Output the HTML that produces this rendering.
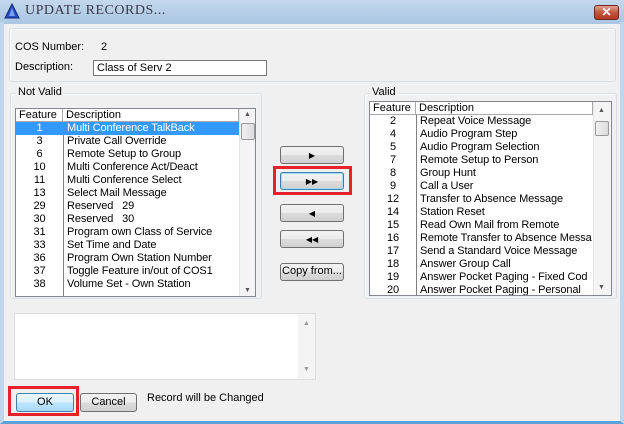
<!DOCTYPE html>
<html><head><style>
*{margin:0;padding:0;box-sizing:border-box}
body{width:624px;height:424px;overflow:hidden;background:#f0f0f0;font-family:"Liberation Sans",sans-serif;font-size:11px;color:#000;position:relative}
.a{position:absolute}
.title{left:0;top:0;width:624px;height:24px;background:linear-gradient(#c4d8ec,#a9c6e3);}
.frame{left:0;top:22px;width:624px;height:402px;border-left:4px solid #c0d6ec;border-right:4px solid #c0d6ec;border-bottom:3px solid #5ba3d8}
.grp{border:1px solid #d5dfe5;border-radius:3px;box-shadow:inset 1px 1px #fff}
.lbl{background:#f0f0f0;padding:0 2px}
.list{background:#fff;border:1px solid #828790;overflow:hidden}
.hdr{position:absolute;top:0;height:13px;border-bottom:1px solid #aaa;border-right:1px solid #aaa;line-height:12px;padding-left:3px}
.row{position:absolute;height:13px;line-height:13px;white-space:nowrap;letter-spacing:-0.1px}
.sb{position:absolute;top:0;bottom:0;background:#f4f4f4;border-left:1px solid #e6e6e6}
.btn{position:absolute;border:1px solid #707070;border-radius:3px;background:linear-gradient(#f2f2f2 0,#ebebeb 50%,#dddddd 51%,#cfcfcf 100%);text-align:center;line-height:17px}
.red{position:absolute;border:3px solid #e8202a}
</style></head><body>
<div class="a title"></div>
<div class="a frame"></div>
<svg class="a" style="left:4px;top:3px" width="16" height="16"><polygon points="8,1 15,15 1,15" fill="#2a4fc4" stroke="#102a7a"/><polygon points="8,5 11,13 5,13" fill="#7aa0f0"/></svg>
<div class="a" style="left:25px;top:3px;font-family:'Liberation Serif',serif;font-size:14px;color:#3a3a4a;letter-spacing:0.5px">UPDATE RECORDS...</div>
<div class="a" style="left:594px;top:5px;width:25px;height:15px;border:1px solid #6d2a20;border-radius:3px;background:linear-gradient(#e4a08e,#c4553e 50%,#b23a22);color:#fff;font-weight:bold;text-align:center;line-height:13px;font-size:12px">✕</div>

<div class="a grp" style="left:9px;top:28px;width:607px;height:54px"></div>
<div class="a" style="left:15px;top:41px">COS Number:</div>
<div class="a" style="left:101px;top:41px">2</div>
<div class="a" style="left:15px;top:61px">Description:</div>
<div class="a" style="left:93px;top:60px;width:174px;height:16px;border:1px solid #7a7a7a;background:#fff;padding-left:3px;line-height:14px">Class of Serv 2</div>

<div class="a grp" style="left:10px;top:93px;width:252px;height:206px"></div>
<div class="a lbl" style="left:16px;top:86px">Not Valid</div>
<div class="a list" style="left:15px;top:108px;width:241px;height:189px">
<div class="hdr" style="left:0;width:47px">Feature</div>
<div class="hdr" style="left:47px;width:176px">Description</div>
<div class="a" style="left:47px;top:13px;width:1px;height:180px;background:#808080"></div>
<div class="a" style="left:0;top:13px;width:223px;height:13px;background:#3399ff"></div>
<div id="nv"></div>
<div class="sb" style="left:223px;width:17px"><div class="a" style="left:1px;top:14px;width:14px;height:17px;border:1px solid #999;background:linear-gradient(90deg,#f0f0f0,#dcdcdc);border-radius:2px"></div><div class="a" style="left:4px;top:2px;font-size:7px;color:#555">▲</div><div class="a" style="left:4px;bottom:2px;font-size:7px;color:#555">▼</div></div>
</div>

<div class="a grp" style="left:364px;top:93px;width:253px;height:206px"></div>
<div class="a lbl" style="left:370px;top:86px">Valid</div>
<div class="a list" style="left:369px;top:101px;width:243px;height:195px">
<div class="hdr" style="left:0;width:46px">Feature</div>
<div class="hdr" style="left:46px;width:177px">Description</div>
<div class="a" style="left:46px;top:13px;width:1px;height:190px;background:#808080"></div>
<div id="v"></div>
<div class="sb" style="left:223px;width:18px"><div class="a" style="left:1px;top:19px;width:14px;height:15px;border:1px solid #999;background:linear-gradient(90deg,#f0f0f0,#dcdcdc);border-radius:2px"></div><div class="a" style="left:4px;top:5px;font-size:7px;color:#555">▲</div><div class="a" style="left:4px;bottom:4px;font-size:7px;color:#555">▼</div></div>
</div>

<div class="btn" style="left:280px;top:146px;width:64px;height:18px;font-size:8px">▶</div>
<div class="btn" style="left:280px;top:172px;width:64px;height:18px;font-size:8px;border-color:#3c7fb1;box-shadow:inset 0 0 0 1px #9fdcf5">▶▶</div>
<div class="red" style="left:273px;top:166px;width:79px;height:29px"></div>
<div class="btn" style="left:280px;top:204px;width:64px;height:18px;font-size:8px">◀</div>
<div class="btn" style="left:280px;top:230px;width:64px;height:18px;font-size:8px">◀◀</div>
<div class="btn" style="left:280px;top:263px;width:64px;height:18px;line-height:15px">Copy from...</div>

<div class="a" style="left:14px;top:313px;width:302px;height:67px;background:#fff;border:1px solid #ddd"><div class="a" style="right:0;top:0;bottom:0;width:17px;background:#f4f4f4"><div class="a" style="left:5px;top:6px;font-size:7px;color:#999">▲</div><div class="a" style="left:5px;bottom:6px;font-size:7px;color:#999">▼</div></div></div>

<div class="btn" style="left:16px;top:393px;width:58px;height:19px;border-color:#3c7fb1;background:linear-gradient(#eaf6fd,#d9f0fc 50%,#bee6fd 51%,#a7d9f5)">OK</div>
<div class="red" style="left:8px;top:386px;width:71px;height:30px"></div>
<div class="btn" style="left:80px;top:393px;width:57px;height:19px">Cancel</div>
<div class="a" style="left:147px;top:392px">Record will be Changed</div>

<script>
var nv=[["1","Multi Conference TalkBack"],["3","Private Call Override"],["6","Remote Setup to Group"],["10","Multi Conference Act/Deact"],["11","Multi Conference Select"],["13","Select Mail Message"],["29","Reserved   29"],["30","Reserved   30"],["31","Program own Class of Service"],["33","Set Time and Date"],["36","Program Own Station Number"],["37","Toggle Feature in/out of COS1"],["38","Volume Set - Own Station"]];
var v=[["2","Repeat Voice Message"],["4","Audio Program Step"],["5","Audio Program Selection"],["7","Remote Setup to Person"],["8","Group Hunt"],["9","Call a User"],["12","Transfer to Absence Message"],["14","Station Reset"],["15","Read Own Mail from Remote"],["16","Remote Transfer to Absence Messa"],["17","Send a Standard Voice Message"],["18","Answer Group Call"],["19","Answer Pocket Paging - Fixed Cod"],["20","Answer Pocket Paging - Personal"]];
function f(id,d,w){var h="";d.forEach(function(r,i){var t=13+i*13,c=(id=="nv"&&i==0)?"color:#fff;":"";h+='<div class="row" style="'+c+'top:'+t+'px;left:0;width:'+w+'px;text-align:center">'+r[0]+'</div><div class="row" style="'+c+'top:'+t+'px;left:'+(w+4)+'px;white-space:pre">'+r[1]+'</div>';});document.getElementById(id).innerHTML=h;}
f("nv",nv,47);f("v",v,46);
</script>
</body></html>
